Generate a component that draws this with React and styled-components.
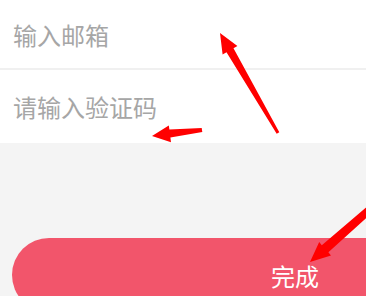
import React from 'react';
import styled, { createGlobalStyle } from 'styled-components';

const GlobalStyle = createGlobalStyle`
  html, body {
    margin: 0;
    padding: 0;
    background: #f4f4f4;
    overflow: hidden;
  }
  body {
    font-family: "Noto Sans CJK SC", "Noto Sans", sans-serif;
  }
`;

const Page = styled.div`
  position: relative;
  width: 366px;
  height: 296px;
  overflow: hidden;
  background: #f4f4f4;
`;

const Form = styled.div`
  display: flex;
  flex-direction: column;
  background: #fff;
`;

const Field = styled.div`
  display: flex;
  align-items: center;
  height: ${props => props.height}px;
  padding: 0 13px;
  border-bottom: ${props => (props.divider ? '2px solid #f0f0f0' : 'none')};
`;

const Input = styled.input`
  flex: 1;
  border: none;
  outline: none;
  background: transparent;
  padding: 0;
  font-family: inherit;
  font-size: 24px;
  color: #333;

  &::placeholder {
    color: #a6a6a6;
  }
`;

const Actions = styled.div`
  padding: 95px 0 0 12px;
`;

const SubmitButton = styled.button`
  display: flex;
  align-items: center;
  justify-content: center;
  width: 566px;
  height: 74px;
  border: none;
  border-radius: 37px;
  background: #f2556b;
  color: #fff;
  font-family: inherit;
  font-size: 24px;
  padding: 0;
`;

const Annotations = styled.svg`
  position: absolute;
  left: 0;
  top: 0;
  pointer-events: none;
`;

// tapered red annotation arrows drawn over the screenshot
const arrows = [
  '220,33 237.4,46.0 233.5,48.3 279.3,132.3 276.7,133.7 226.5,52.3 222.6,54.6',
  '152,136 171.0,142.3 170.4,137.4 202.3,132.0 201.7,128.0 169.4,129.4 168.8,125.5',
  '310,262 331.0,255.5 328.4,252.3 402.3,185.6 397.7,180.4 321.8,245.3 319.2,242.1',
];

export default function App() {
  return (
    <Page>
      <GlobalStyle />
      <Form>
        <Field height={68} divider>
          <Input placeholder="输入邮箱" />
        </Field>
        <Field height={73}>
          <Input placeholder="请输入验证码" />
        </Field>
      </Form>
      <Actions>
        <SubmitButton>完成</SubmitButton>
      </Actions>
      <Annotations width="366" height="296" viewBox="0 0 366 296">
        {arrows.map(points => (
          <polygon key={points} points={points} fill="#ff0000" />
        ))}
      </Annotations>
    </Page>
  );
}
